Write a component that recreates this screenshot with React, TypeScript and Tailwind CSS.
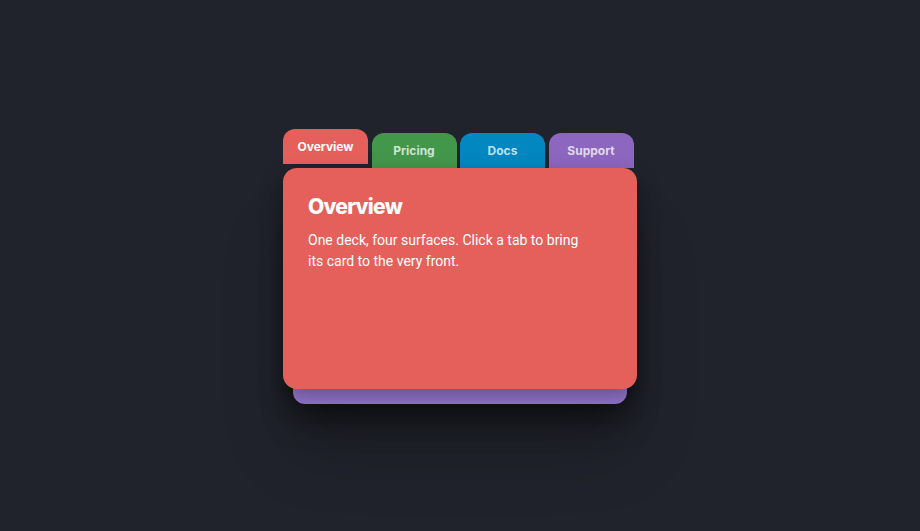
const tabs = [
  { id: 'overview', label: 'Overview', bg: 'bg-[#e5605b]' },
  { id: 'pricing', label: 'Pricing', bg: 'bg-[#43974b]' },
  { id: 'docs', label: 'Docs', bg: 'bg-[#0387c0]' },
  { id: 'support', label: 'Support', bg: 'bg-[#8d66bf]' },
];

export default function App() {
  const active = 'overview';

  return (
    <div className="flex h-[531px] w-full items-center justify-center bg-[#20232b] font-['Inter',sans-serif]">
      <div className="w-[354px] pt-[6px]">
        {/* Tabs */}
        <div className="flex h-[35px] items-end gap-[3.5px]">
          {tabs.map(t => (
            <button
              key={t.id}
              className={`flex h-[35px] w-[85px] items-center justify-center rounded-t-[12px] pt-px text-[12px] font-bold ${t.bg} ${
                t.id === active ? '-translate-y-1 text-white' : 'text-white/75'
              }`}
            >
              {t.label}
            </button>
          ))}
        </div>

        {/* Deck */}
        <div className="relative pb-[15px]">
          <div className="absolute inset-x-[10px] bottom-0 top-[30px] rounded-b-[12px] bg-[#9b7bd9] shadow-[0_16px_30px_rgba(0,0,0,0.45),0_40px_70px_rgba(0,0,0,0.22)]" />
          <div className="relative h-[221px] rounded-[14px] bg-[#e5605b] px-[25px] pt-[25px] shadow-[0_10px_22px_rgba(0,0,0,0.35)]">
            <h2 className="text-[21px] leading-[28px] font-extrabold tracking-[-0.035em] text-white">Overview</h2>
            <p className="mt-[9px] font-['Roboto',sans-serif] text-[14px] leading-[21px] text-white">
              One deck, four surfaces. Click a tab to bring
              <br />
              its card to the very front.
            </p>
          </div>
        </div>
      </div>
    </div>
  );
}
